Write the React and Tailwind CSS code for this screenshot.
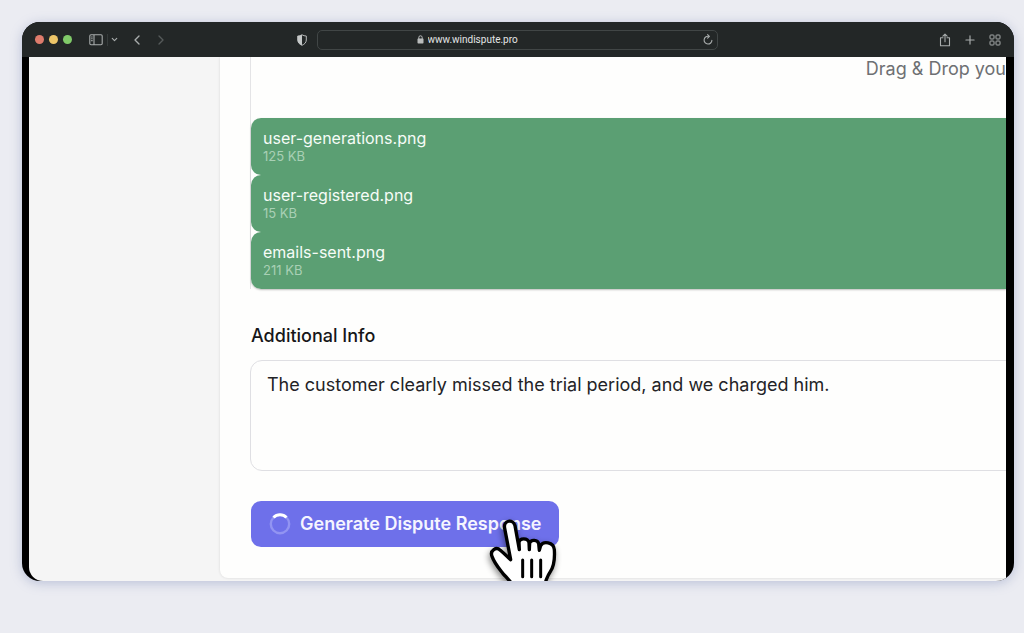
import { useState } from 'react'
import { ChevronDown, ChevronLeft, ChevronRight, Plus } from 'lucide-react'

const files = [
    { name: 'user-generations.png', size: '125 KB' },
    { name: 'user-registered.png', size: '15 KB' },
    { name: 'emails-sent.png', size: '211 KB' },
]

function SidebarIcon() {
    return (
        <svg width="14" height="12" viewBox="0 0 14 12" fill="none" stroke="currentColor" strokeWidth="1.1">
            <rect x="0.8" y="0.8" width="12.4" height="10" rx="1.2" />
            <path d="M5 1v10M2.2 3h1.4M2.2 4.8h1.4M2.2 6.6h1.4" />
        </svg>
    )
}

function ShieldIcon() {
    return (
        <svg width="10" height="12" viewBox="0 0 10 12">
            <path d="M5 .8C3.8 1.6 2.2 2 .7 2v4c0 2.6 1.9 4.3 4.3 5.3C7.4 10.3 9.3 8.6 9.3 6V2C7.8 2 6.2 1.6 5 .8Z" fill="none" stroke="#b5b8b8" strokeWidth="1" />
            <path d="M5 .8C3.8 1.6 2.2 2 .7 2v4c0 2.6 1.9 4.3 4.3 5.3Z" fill="#c5c8c8" />
        </svg>
    )
}

function LockIcon() {
    return (
        <svg width="7" height="9" viewBox="0 0 7 9" className="shrink-0">
            <rect x="0.5" y="3.6" width="6" height="4.9" rx="0.8" fill="#b9bcbc" />
            <path d="M1.8 4V2.5a1.7 1.7 0 0 1 3.4 0V4" fill="none" stroke="#b9bcbc" strokeWidth="1" />
        </svg>
    )
}

function ReloadIcon() {
    return (
        <svg width="10" height="11" viewBox="0 0 10 11" fill="none" stroke="currentColor" strokeWidth="1.1" strokeLinecap="round" strokeLinejoin="round">
            <path d="M5.6 2.3A3.9 3.9 0 1 0 8.9 6.2" />
            <path d="M4.6 .6l1.8 1.7-1.8 1.8" />
        </svg>
    )
}

function ShareIcon() {
    return (
        <svg width="12" height="14" viewBox="0 0 12 14" fill="none" stroke="currentColor" strokeWidth="1.1" strokeLinecap="round" strokeLinejoin="round">
            <path d="M4 4.7H1.5v8h9v-8H8M6 8.7V1.2M3.9 3.2L6 1.1l2.1 2.1" />
        </svg>
    )
}

function GridIcon() {
    return (
        <svg width="12" height="12" viewBox="0 0 12 12" fill="none" stroke="currentColor" strokeWidth="1">
            <rect x="1" y="1" width="4" height="4" rx="0.8" />
            <rect x="7" y="1" width="4" height="4" rx="0.8" />
            <rect x="1" y="7" width="4" height="4" rx="0.8" />
            <rect x="7" y="7" width="4" height="4" rx="0.8" />
        </svg>
    )
}

function Spinner() {
    return (
        <svg width="22" height="22" viewBox="0 0 22 22" fill="none">
            <circle cx="11" cy="11" r="9.2" stroke="#9294f2" strokeWidth="2.4" />
            <path d="M4.5 4.5a9.2 9.2 0 0 1 13 0" stroke="#fff" strokeWidth="3" />
        </svg>
    )
}

function HandCursor() {
    return (
        <svg
            width="72"
            height="72"
            viewBox="50 50 216 216"
            className="pointer-events-none absolute right-0 top-4 drop-shadow-[-1px_3px_3px_rgba(0,0,0,0.45)]"
            aria-hidden="true"
        >
            <path
                d="M121 178L103 84C98 60 128 54 134 76L147 148L146 126C148 112 172 112 176 126L177 148L178 128C182 116 202 118 205 130L207 150L211 136C218 122 250 124 252 148C254 178 252 196 240 214C232 226 226 236 222 262H130C120 238 108 232 98 220C84 202 72 188 65 168C58 150 78 138 90 150C102 160 112 170 121 178Z"
                fill="#fff"
                stroke="#000"
                strokeWidth="10"
                strokeLinejoin="round"
            />
            <path d="M157 179v50M184 179v50M211 179v50" stroke="#000" strokeWidth="9" strokeLinecap="round" />
        </svg>
    )
}

function BrowserBar() {
    return (
        <header className="grid h-[35px] grid-cols-[1fr_401px_1fr] items-center bg-[#232727] pr-0.5 text-[#a9adad]">
            <div className="flex items-center pl-[13px] pr-2.5">
                <div className="flex gap-[5px]">
                    <span className="size-[9px] rounded-full bg-[#de7b6c]" />
                    <span className="size-[9px] rounded-full bg-[#edc568]" />
                    <span className="size-[9px] rounded-full bg-[#80ca69]" />
                </div>
                <button type="button" aria-label="Show sidebar" className="ml-[17px]"><SidebarIcon /></button>
                <span className="ml-1 h-3 w-px bg-[#363b3b]" />
                <button type="button" aria-label="Sidebar options" className="ml-0.5"><ChevronDown size={9} strokeWidth={3} /></button>
                <button type="button" aria-label="Back" className="ml-2.5"><ChevronLeft size={16} strokeWidth={2} /></button>
                <button type="button" aria-label="Forward" className="ml-2 text-[#555a5a]"><ChevronRight size={16} strokeWidth={2} /></button>
                <button type="button" aria-label="Privacy report" className="ml-auto"><ShieldIcon /></button>
            </div>

            <div className="flex h-5 items-center rounded-[5px] border border-[#414646] px-1">
                <label className="flex flex-1 items-center gap-1 pl-[95px]">
                    <LockIcon />
                    <input
                        type="text"
                        aria-label="Address"
                        defaultValue="www.windispute.pro"
                        className="min-w-0 flex-1 bg-transparent font-[Roboto,sans-serif] text-[10px] leading-4 text-[#e3e5e5] outline-none"
                    />
                </label>
                <button type="button" aria-label="Reload"><ReloadIcon /></button>
            </div>

            <div className="flex items-center justify-end gap-3 pr-[11px]">
                <button type="button" aria-label="Share"><ShareIcon /></button>
                <button type="button" aria-label="New tab"><Plus size={14} strokeWidth={2} /></button>
                <button type="button" aria-label="Tab overview"><GridIcon /></button>
            </div>
        </header>
    )
}

export default function App() {
    const [info, setInfo] = useState('The customer clearly missed the trial period, and we charged him.')

    return (
        <div className="min-h-screen bg-[#ebecf2] pt-[22px] pr-[10px] pl-[22px] font-[Inter,sans-serif]">
            <div className="overflow-hidden rounded-[18px] bg-black shadow-[0_2px_12px_rgba(110,125,175,0.4)]">
                <BrowserBar />

                <div className="mr-2 ml-[7px] flex overflow-hidden rounded-bl-[14px] bg-[#f5f5f5] pb-[3px]">
                    <aside className="w-[191px] shrink-0" />

                    <main className="min-w-0 flex-1 rounded-bl-lg bg-[#fefefd] pb-[31px] pl-[30px] shadow-[0_0_3px_rgba(0,0,0,0.12)]">
                        <div className="border-l border-[#e4e4e6]">
                            <div className="flex h-[61px] justify-end text-lg leading-6 text-[#6e7073]">
                                Drag &amp; Drop you
                            </div>
                            <ul className="rounded-l-[10px] shadow-[0_1px_2px_rgba(0,0,0,0.25)]">
                                {files.map((file) => (
                                    <li key={file.name} className="h-[57px] rounded-l-[10px] bg-[#5b9f73] px-3 pt-2.5">
                                        <p className="text-base leading-5 text-[#f6fcf7]">{file.name}</p>
                                        <p className="text-[13px] leading-4 text-[#a9d0b5]">{file.size}</p>
                                    </li>
                                ))}
                            </ul>
                        </div>

                        <label htmlFor="info" className="mt-8 ml-px block pt-px text-lg leading-7 font-medium text-[#161618]">
                            Additional Info
                        </label>
                        <textarea
                            id="info"
                            value={info}
                            onChange={(e) => setInfo(e.target.value)}
                            className="mt-2.5 block h-[111px] w-[calc(100%+24px)] resize-none rounded-xl border border-[#dfdfe3] bg-transparent px-4 py-3 text-lg leading-6 text-[#232326] outline-none"
                        />

                        <button
                            type="button"
                            className="relative mt-[30px] ml-px flex h-[46px] items-center gap-[9px] rounded-[10px] bg-[#6e70ea] px-[18px] text-lg font-semibold whitespace-nowrap text-[#f5f5ff]"
                        >
                            <Spinner />
                            Generate Dispute Response
                            <HandCursor />
                        </button>
                    </main>
                </div>
            </div>
        </div>
    )
}
